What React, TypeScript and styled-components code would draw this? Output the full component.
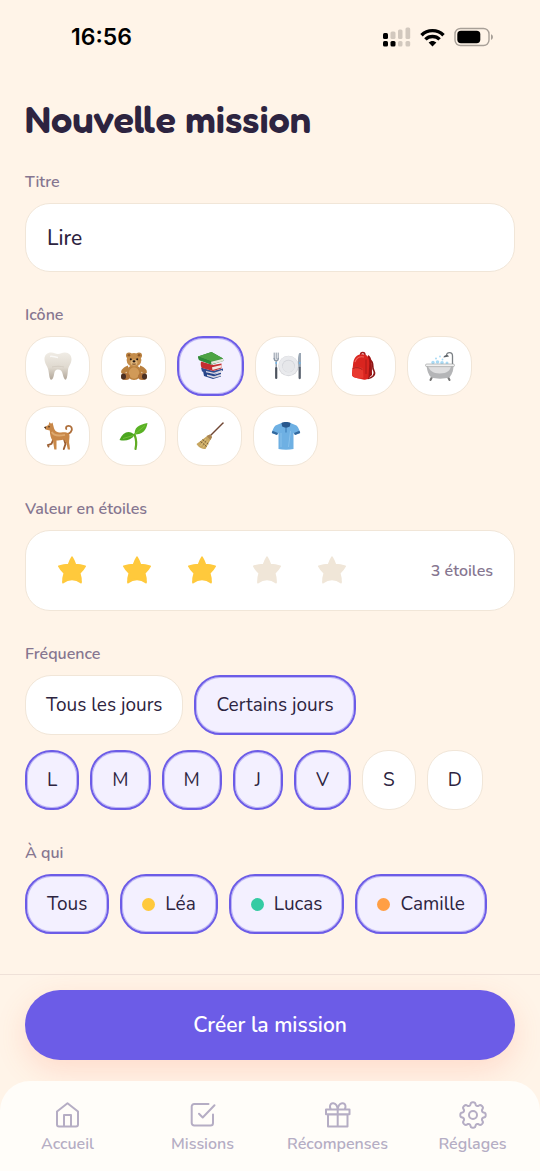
import React, { useState } from 'react';
import styled, { createGlobalStyle } from 'styled-components';

const color = {
  page: '#fff4e8',
  ink: '#2d2440',
  muted: '#867690',
  tab: '#b5adc4',
  primary: '#6c5ce7',
  tint: '#f3f0ff',
  line: '#f1e6d8',
  star: '#ffc93c',
  starOff: '#f0e6d8',
};

const GlobalStyle = createGlobalStyle`
  *, *::before, *::after { box-sizing: border-box; }
  body {
    margin: 0;
    background: ${color.page};
    color: ${color.ink};
    font-family: Nunito, Lato, "Open Sans", sans-serif;
    font-size: 19px;
  }
`;

const Screen = styled.div`
  min-height: 100vh;
  display: flex;
  flex-direction: column;
`;

const StatusBar = styled.header`
  height: 74px;
  padding: 0 46px 0 71px;
  display: flex;
  align-items: center;
  justify-content: space-between;
  color: #000;
`;

const Clock = styled.time`
  font: 600 23px/28px Inter, sans-serif;
`;

const StatusIcons = styled.div`
  display: flex;
  align-items: center;
  gap: 9px;
`;

const Form = styled.form`
  flex: 1;
  display: flex;
  flex-direction: column;
`;

const Content = styled.main`
  flex: 1;
  padding: 20px 25px 40px;
  display: flex;
  flex-direction: column;
  gap: 31px;
`;

const Title = styled.h1`
  margin: 0 0 -5px;
  font-family: Fredoka, Nunito, Lato, sans-serif;
  font-size: 38px;
  line-height: 50px;
  font-weight: 600;
`;

const Field = styled.div`
  display: flex;
  flex-direction: column;
  gap: 9px;
`;

const Caption = styled.label`
  color: ${color.muted};
  font-size: 16px;
  line-height: 24px;
  font-weight: 600;
`;

const TextInput = styled.input`
  width: 100%;
  height: 69px;
  padding: 0 21px;
  border: 1px solid ${color.line};
  border-radius: 25px;
  background: #fff;
  color: inherit;
  font: inherit;
  font-size: 21px;
  font-weight: 500;
  outline: none;
`;

const ChoiceRow = styled.div<{ $spaced?: boolean }>`
  display: flex;
  flex-wrap: wrap;
  gap: 10px 11px;
  margin-top: ${(p) => (p.$spaced ? '6px' : '0')};
`;

const Choice = styled.label<{ $on: boolean }>`
  position: relative;
  height: 60px;
  padding: 0 20px;
  display: inline-flex;
  align-items: center;
  gap: 10px;
  border: ${(p) => (p.$on ? `2px solid ${color.primary}` : `1px solid ${color.line}`)};
  border-radius: 26px;
  background: ${(p) => (p.$on ? color.tint : '#fff')};
  box-shadow: ${(p) => (p.$on ? 'inset 0 0 0 1px rgba(108, 92, 231, 0.4)' : 'none')};
  line-height: 26px;
  cursor: pointer;
`;

const HiddenInput = styled.input`
  position: absolute;
  inset: 0;
  width: 100%;
  height: 100%;
  margin: 0;
  opacity: 0;
  cursor: pointer;
`;

const EmojiBox = styled.span`
  width: 23px;
  display: flex;
  justify-content: center;

  svg {
    flex: none;
    width: 30px;
    height: 30px;
  }
`;

const Dot = styled.span<{ $color: string }>`
  width: 13px;
  height: 13px;
  border-radius: 50%;
  background: ${(p) => p.$color};
`;

const StarCard = styled.div`
  height: 81px;
  padding: 0 21px;
  display: flex;
  align-items: center;
  justify-content: space-between;
  border: 1px solid ${color.line};
  border-radius: 25px;
  background: #fff;
`;

const Stars = styled.div`
  display: flex;
  gap: 15px;
`;

const StarChoice = styled.label`
  position: relative;
  width: 50px;
  height: 50px;
  display: grid;
  place-items: center;
`;

const StarCount = styled.output`
  color: ${color.muted};
  font-size: 16px;
  line-height: 24px;
  font-weight: 600;
`;

const SubmitBar = styled.div`
  padding: 15px 25px 21px;
  border-top: 1px solid #efe1d8;
`;

const SubmitButton = styled.button`
  width: 100%;
  height: 70px;
  border: 0;
  border-radius: 35px;
  background: ${color.primary};
  box-shadow: 0 10px 30px rgba(255, 107, 74, 0.18);
  color: #fff;
  font: inherit;
  font-size: 21px;
  font-weight: 600;
  cursor: pointer;
`;

const TabBar = styled.nav`
  position: relative;
  height: 90px;
  padding-top: 20px;
  display: grid;
  grid-template-columns: repeat(4, 1fr);
  align-items: start;
  border-radius: 30px 30px 0 0;
  background: #fffdf9;
`;

const Tab = styled.a`
  display: flex;
  flex-direction: column;
  align-items: center;
  gap: 3px;
  color: ${color.tab};
  font-size: 16px;
  line-height: 24px;
  font-weight: 600;
  text-decoration: none;

  svg {
    width: 28px;
    height: 28px;
  }
`;

const SignalIcon = () => (
  <svg width="28" height="20" viewBox="0 0 28 20" aria-hidden="true">
    <g fill="#000">
      <rect x="0" y="6" width="5" height="6" rx="1.5" />
      <rect x="0" y="14" width="5" height="5.5" rx="1.5" />
      <rect x="7.5" y="14" width="5" height="5.5" rx="1.5" />
    </g>
    <g fill="#d2c8be">
      <rect x="7.5" y="4.5" width="5" height="7.5" rx="1.5" />
      <rect x="15" y="2.5" width="4.5" height="9.5" rx="1.5" />
      <rect x="22.5" y="0.5" width="4.7" height="11.5" rx="1.5" />
      <rect x="15" y="14" width="4.5" height="5.5" rx="1.5" />
      <rect x="22.5" y="14" width="4.7" height="5.5" rx="1.5" />
    </g>
  </svg>
);

const WifiIcon = () => (
  <svg width="25" height="19" viewBox="0 0 25 19" aria-hidden="true">
    <g fill="none" stroke="#000" strokeWidth="3.4">
      <path d="M1.5 7.2C7.5 1.1 17.5 1.1 23.5 7.2" />
      <path d="M5.4 11.4C9.3 7.5 15.7 7.5 19.6 11.4" />
    </g>
    <path d="M12.5 18.5 8.6 14.6C10.9 12.5 14.1 12.5 16.4 14.6Z" fill="#000" />
  </svg>
);

const BatteryIcon = () => (
  <svg width="40" height="20" viewBox="0 0 40 20" aria-hidden="true">
    <rect x="1" y="1.5" width="34" height="17" rx="5.5" fill="none" stroke="#a8a098" strokeWidth="1.4" />
    <rect x="3.3" y="3.8" width="23" height="12.4" rx="3.7" fill="#000" />
    <path d="M37 7.2C39.6 8 39.6 12 37 12.8Z" fill="#a8a098" />
  </svg>
);

const StarIcon = ({ filled }: { filled: boolean }) => {
  const fill = filled ? color.star : color.starOff;
  return (
    <svg width="30" height="30" viewBox="0 0 30 30" aria-hidden="true">
      <path
        d="M15 1.2Q16.800 3.900 18.400 8.600Q23.500 8.700 28.200 10.200Q26.500 13.600 22.700 17.200Q24.200 21.500 24 26.700Q19.800 23.300 15 23.300Q10.200 23.300 6 26.700Q5.800 21.500 7.300 17.200Q3.500 13.600 1.800 10.200Q6.500 8.700 11.600 8.600Q13.200 3.900 15 1.200Z"
        fill={fill}
        stroke={fill}
        strokeWidth="1.7"
        strokeLinejoin="round"
      />
    </svg>
  );
};

const Tooth = () => (
  <svg viewBox="0 0 30 30" aria-hidden="true">
    <defs>
      <linearGradient id="tooth" x1="0" y1="0" x2="0" y2="1">
        <stop offset="0" stopColor="#f0ece5" />
        <stop offset=".55" stopColor="#dfd9cf" />
        <stop offset="1" stopColor="#b0a598" />
      </linearGradient>
    </defs>
    <path
      d="M1.500 8C1.500 3.500 5 1.300 8.300 1.600C11 1.800 12.500 3 15 3C17.500 3 19 1.500 22 1.600C26 1.800 28.700 4.500 28.500 8.500C28.300 13 25.500 15 25 19C24.600 22.500 24.300 27 23 28.600C21.700 29.500 20.500 26.500 19.800 23.500C19 20.500 18 18.600 15 18.600C12 18.600 11.500 21 11 23.800C10.500 26.500 9.300 29.500 7.800 28.700C6.200 27.500 6 22 5.300 19C4.500 15 1.500 12.500 1.500 8Z"
      fill="url(#tooth)"
    />
    <path d="M7 5.500C10 4.500 12 6.500 15 6.500" fill="none" stroke="#fff" strokeWidth="1.5" opacity=".7" />
    <path d="M9 16C12 15 18 15 21 16" fill="none" stroke="#cbc3b9" strokeWidth="1" opacity=".6" />
  </svg>
);

const Teddy = () => (
  <svg viewBox="0 0 30 30" aria-hidden="true">
    <g fill="#b9803f">
      <circle cx="10" cy="4.500" r="3" />
      <circle cx="20" cy="4.500" r="3" />
      <path d="M9 14.500C4 16.500 1.500 19 2.300 22C3.500 24 7 22 9.500 19Z" />
      <path d="M21 14.500C26 16.500 28.500 19 27.700 22C26.500 24 23 22 20.500 19Z" />
      <ellipse cx="15" cy="21.500" rx="7.500" ry="7.500" />
    </g>
    <ellipse cx="15" cy="22" rx="5.200" ry="5.800" fill="#d19a58" />
    <ellipse cx="15" cy="9" rx="7.400" ry="7" fill="#c48c4a" />
    <circle cx="10" cy="4.300" r="1.300" fill="#8f5929" />
    <circle cx="20" cy="4.300" r="1.300" fill="#8f5929" />
    <ellipse cx="15" cy="11.500" rx="3.500" ry="3" fill="#deb479" />
    <circle cx="11.800" cy="8.200" r="1" fill="#221713" />
    <circle cx="18.200" cy="8.200" r="1" fill="#221713" />
    <ellipse cx="15" cy="10.200" rx="1.500" ry="1" fill="#221713" />
    <path d="M15 11v1.700M13 12.800c1.200 .9 2.800 .9 4 0" stroke="#6b3f20" strokeWidth=".7" fill="none" />
    <ellipse cx="6.500" cy="25.500" rx="4.500" ry="3.500" fill="#b1733a" />
    <ellipse cx="23.500" cy="25.500" rx="4.500" ry="3.500" fill="#b1733a" />
    <ellipse cx="4.500" cy="25.500" rx="2.500" ry="2.900" fill="#4a3024" />
    <ellipse cx="25.500" cy="25.500" rx="2.500" ry="2.900" fill="#4a3024" />
  </svg>
);

const Books = () => (
  <svg viewBox="0 0 30 30" aria-hidden="true">
    <path d="M7 20 19 23.500 25 21.500V25.500L17 28 8 25Z" fill="#27458a" />
    <path d="M11 23.500 18 25.300 25 23V25L17.500 27 11 25Z" fill="#d9d7e0" />
    <path d="M5 16.500 17 20 27 17.500V19.500L18 23.500 6 20.500Z" fill="#304d91" />
    <path d="M10 20 18 21.700 26 19V21L18 23 10 21.300Z" fill="#dedbe4" />
    <path d="M5 10.500 17 14 25.500 12.500V17.500L17 20 6 17C4.500 15.500 4.500 12.500 5 10.500Z" fill="#c42e30" />
    <path d="M16 16.200 25.500 14V16.500L16.500 19Z" fill="#f3e6e2" />
    <path d="M2 5.500 15.500 1 27 7.500 27.300 10 16 13.500 3 9Z" fill="#257b34" />
    <path d="M2 5.500 15.500 1 27 7.500 15.500 10.500Z" fill="#4da344" />
    <path d="M15 10.700 27 7.700V10.300L15.500 13.200Z" fill="#e3e8dc" />
    <path d="M2 5.500 15 10.500V13.500L3 9Z" fill="#2e8a38" />
  </svg>
);

const Plate = () => (
  <svg viewBox="0 0 30 30" aria-hidden="true">
    <circle cx="15.500" cy="15" r="10.200" fill="#d6d7db" />
    <circle cx="15.500" cy="14.600" r="9.600" fill="#e9eaed" />
    <circle cx="15.500" cy="15" r="6.300" fill="#d1d3d8" />
    <circle cx="15.500" cy="15.400" r="5.800" fill="#e6e7ea" />
    <g fill="none" stroke="#8b96a4" strokeLinecap="round">
      <path d="M1.200 2V7.500M3.200 2V8M5.200 2V7.500" strokeWidth="1" />
      <path d="M1.200 7.500C1.300 10.500 5.200 10.500 5.200 7.500M3.200 10V16" strokeWidth="1.4" />
      <path d="M3.200 17V27" stroke="#4c535e" strokeWidth="2.2" />
    </g>
    <path d="M26.300 2C24.500 5 24.800 12 25.500 17H28V2Z" fill="#99a6b4" />
    <path d="M26.700 17V27" stroke="#59616e" strokeWidth="2.3" strokeLinecap="round" />
    <path d="M2.500 12h1.500M26 12h1.500" stroke="#70b3e6" strokeWidth="2" />
  </svg>
);

const Backpack = () => (
  <svg viewBox="0 0 30 30" aria-hidden="true">
    <path d="M21 9C26 12 22 16 25 20C27 24 23 27 19 27.500" fill="none" stroke="#8c1717" strokeWidth="1.6" />
    <path d="M19 4C23.500 6 23 14 23 24L18 28.500Z" fill="#9e1414" />
    <path d="M11.500 4C11.500 .5 16 .5 16 4" fill="none" stroke="#a01818" strokeWidth="1.5" />
    <path d="M4 14C4.500 7 7 3.500 13 3.200C19 3 20.500 7 20.300 13L19.500 26C19 28.500 17 29 14 28.500L5.500 26.500C3.500 26 3 24.500 3 22.500Z" fill="#d9251f" />
    <path d="M6 11C7.500 6.500 10 5 15 6" fill="none" stroke="#f1675d" strokeWidth="1.2" />
    <path d="M3.500 17C7 15 12 15.500 14 18L14.500 26.500C12 28.500 5 27 3 24.500Z" fill="#e8392f" />
    <path d="M3.800 17.500C7 16 11 16.500 13.500 18.700M17 8.500V23" fill="none" stroke="#9e1818" strokeWidth=".8" />
  </svg>
);

const Bathtub = () => (
  <svg viewBox="0 0 30 30" aria-hidden="true">
    <path d="M27.500 15V5C27.500 .5 21.500 .5 21.500 4.500" fill="none" stroke="#7b8085" strokeWidth="1.3" />
    <path d="M18.500 6.500C18.500 3.500 23.500 3 24 5.500Z" fill="#5c6268" />
    <g fill="#a9daf4">
      <circle cx="8" cy="11.500" r="1.700" />
      <circle cx="12.500" cy="11" r="1.800" />
      <circle cx="17" cy="11.800" r="1.800" />
      <circle cx="22" cy="12" r="1.500" />
      <circle cx="11" cy="7.500" r="1" />
      <circle cx="15" cy="5.500" r=".9" />
      <circle cx="17.500" cy="8.500" r=".9" />
    </g>
    <path d="M7 26 5.500 29M23 26l1.500 3" stroke="#777" strokeWidth="2" strokeLinecap="round" />
    <path d="M1.500 14.500H28.500C28.500 20 26.500 24.500 24 26.500C20 28 10 28 6.500 26.500C3.500 24.500 2 19 1.500 14.500Z" fill="#b4b5b7" />
    <path d="M3 15H26C25.500 19 22.500 22.500 14.500 22.500C8 22.500 4 19 3 15Z" fill="#dededf" />
    <rect x=".5" y="13" width="29" height="2.600" rx="1.300" fill="#f1f1f1" stroke="#999a9b" strokeWidth=".6" />
  </svg>
);

const Dog = () => (
  <svg viewBox="0 0 30 30" aria-hidden="true">
    <path d="M25.200 12.800C29 11.500 30 7 27.300 5.300C24.800 4 22.300 5.800 23.300 8" fill="none" stroke="#ae6f3b" strokeWidth="1.8" strokeLinecap="round" />
    <path d="M21 18 22.500 23 20.800 28M10.500 18 8.500 22.800 5 24 5.500 25.500" fill="none" stroke="#9b5e31" strokeWidth="1.900" strokeLinecap="round" />
    <path d="M1.500 6 5.500 4 6.500 1 8 2.800 9.500 1.500 10.800 6.500C11.500 9.500 13.500 11.500 18 11.500C23 10.800 26.500 11.500 26.500 15C26.500 18.500 25.500 21 26.500 24L27 28.500H24.800L23.500 22.500 21 18.500C18 19.300 15 19.500 13.500 19.500L13.500 28.500H11.300L10 20C7.800 17.500 7 14 6.800 9.500L2.500 8.500Z" fill="#c88748" />
    <path d="M8.800 11C10.500 14.500 14 15.500 22 13.800" fill="none" stroke="#dda86e" strokeWidth="1.8" />
    <path d="M1 6 3 5.800 2.500 8Z" fill="#2b211e" />
    <circle cx="6" cy="5.700" r=".7" fill="#2b211e" />
  </svg>
);

const Seedling = () => (
  <svg viewBox="0 0 30 30" aria-hidden="true">
    <path d="M16.500 28C18 22 17.200 18 15.500 13.500" fill="none" stroke="#61ac24" strokeWidth="2.2" strokeLinecap="round" />
    <path d="M15.800 13.500C15 7 19 4 28.500 2C27.500 9 23.500 13.500 15.800 13.500Z" fill="#59b124" />
    <path d="M15.800 14C10 8.500 4 11 .5 19C6.500 20.500 12 19 15.800 14Z" fill="#4ba51f" />
    <path d="M16 13 26 4.500M14.500 14.500 4 17.500" fill="none" stroke="#7cc63c" strokeWidth=".8" />
  </svg>
);

const Broom = () => (
  <svg viewBox="0 0 30 30" aria-hidden="true">
    <path d="M14 16 28 2" stroke="#704734" strokeWidth="1.5" strokeLinecap="round" />
    <path d="M11.500 15.500 15 13.500 17 16 15 19.500 10.500 28C7 28 3 26 1.500 23Z" fill="#c7a660" />
    <path d="M11.500 15 15 13.500 17 16 15.500 19Z" fill="#a98350" />
    <path d="M7.500 18.500 13.300 23M5.500 20.500 11.500 25.500" stroke="#765c38" strokeWidth="1" />
    <path d="M11 18 5.500 25M13 19.500 8 26.500" stroke="#e2c987" strokeWidth=".8" />
  </svg>
);

const Shirt = () => (
  <svg viewBox="0 0 30 30" aria-hidden="true">
    <path d="M10.500 2 4.500 4.500C2.500 6 1.500 9.500 .8 12L6 14 7.500 12V28C12 29 18 29 22.500 28V12L24 14 29.200 12C28.500 9.500 27.500 6 25.500 4.500L19.500 2Z" fill="#6eb0e3" />
    <path d="M10.500 2C12 .8 18 .8 19.500 2L18.800 5.500 15 7 11.200 5.500Z" fill="#28588d" />
    <path d="M.8 12 1.500 9.800 7 12 6 14ZM29.200 12 28.500 9.800 23 12 24 14Z" fill="#34699e" />
    <path d="M15 6.500V11.500" stroke="#3d7fb9" strokeWidth="1.2" />
    <path d="M10 12V26M19.500 10 17.500 26" stroke="#94c9ef" strokeWidth="1" opacity=".7" />
  </svg>
);

const stroke = {
  fill: 'none',
  stroke: 'currentColor',
  strokeWidth: 2,
  strokeLinecap: 'round' as const,
  strokeLinejoin: 'round' as const,
};

const HomeIcon = () => (
  <svg viewBox="0 0 28 28" aria-hidden="true" {...stroke}>
    <path d="M3 10.500 13.500 2.300 24 10.500V23.500a2 2 0 0 1-2 2H5A2 2 0 0 1 3 23.500ZM10 25.500V14h7V25.500" />
  </svg>
);

const CheckIcon = () => (
  <svg viewBox="0 0 28 28" aria-hidden="true" {...stroke}>
    <path d="M19.500 3H5.200A2.500 2.500 0 0 0 2.700 5.500V22A2.500 2.500 0 0 0 5.200 24.500H21.500A2.500 2.500 0 0 0 24 22V13.500M10 12.800 13.700 16.500 25.500 4.300" />
  </svg>
);

const GiftIcon = () => (
  <svg viewBox="0 0 28 28" aria-hidden="true" {...stroke}>
    <path d="M2 8.500h23.500v4.700H2ZM4 13.500h19.500V25.500H4ZM13.700 8.500V25.500M13.700 8.500C13 .5 5.500 .5 6 6Q6.200 7.500 7 8.500M13.700 8.500C14.500 .5 22 .5 21.500 6Q21.300 7.500 20.500 8.500" />
  </svg>
);

/* Eight rounded teeth around the hub. */
const gearOutline =
  Array.from({ length: 160 }, (_, i) => {
    const a = (i / 160) * Math.PI * 2;
    const r = 11.2 + 1.5 * Math.tanh(1.8 * Math.cos(8 * a) + 0.4);
    return `${i ? 'L' : 'M'}${(14 + r * Math.cos(a)).toFixed(2)} ${(14 + r * Math.sin(a)).toFixed(2)}`;
  }).join('') + 'Z';

const GearIcon = () => (
  <svg viewBox="0 0 28 28" aria-hidden="true" {...stroke}>
    <path d={gearOutline} />
    <circle cx="14" cy="14" r="4" />
  </svg>
);

const missionIcons = [
  { name: 'Dent', Art: Tooth },
  { name: 'Ours', Art: Teddy },
  { name: 'Livres', Art: Books },
  { name: 'Repas', Art: Plate },
  { name: 'Sac', Art: Backpack },
  { name: 'Bain', Art: Bathtub },
  { name: 'Chien', Art: Dog },
  { name: 'Plante', Art: Seedling },
  { name: 'Balai', Art: Broom },
  { name: 'T-shirt', Art: Shirt },
];

const days = [
  ['L', 'Lundi'],
  ['M', 'Mardi'],
  ['M', 'Mercredi'],
  ['J', 'Jeudi'],
  ['V', 'Vendredi'],
  ['S', 'Samedi'],
  ['D', 'Dimanche'],
];

const children = [
  { name: 'Léa', dot: '#ffc93c' },
  { name: 'Lucas', dot: '#34cba3' },
  { name: 'Camille', dot: '#ff9f45' },
];

const tabs = [
  { name: 'Accueil', Icon: HomeIcon },
  { name: 'Missions', Icon: CheckIcon },
  { name: 'Récompenses', Icon: GiftIcon },
  { name: 'Réglages', Icon: GearIcon },
];

const toggle = (list: number[], i: number) =>
  list.includes(i) ? list.filter((n) => n !== i) : [...list, i];

export default function App() {
  const [title, setTitle] = useState('Lire');
  const [icon, setIcon] = useState(2);
  const [stars, setStars] = useState(3);
  const [frequency, setFrequency] = useState(1);
  const [activeDays, setActiveDays] = useState([0, 1, 2, 3, 4]);
  const [assigned, setAssigned] = useState([0, 1, 2]);
  const everyone = assigned.length === children.length;

  return (
    <Screen>
      <GlobalStyle />
      <StatusBar>
        <Clock>16:56</Clock>
        <StatusIcons>
          <SignalIcon />
          <WifiIcon />
          <BatteryIcon />
        </StatusIcons>
      </StatusBar>

      <Form onSubmit={(e) => e.preventDefault()}>
        <Content>
          <Title>Nouvelle mission</Title>

          <Field>
            <Caption htmlFor="title">Titre</Caption>
            <TextInput id="title" value={title} onChange={(e) => setTitle(e.target.value)} />
          </Field>

          <Field role="radiogroup" aria-labelledby="icon-caption">
            <Caption as="span" id="icon-caption">Icône</Caption>
            <ChoiceRow>
              {missionIcons.map(({ name, Art }, i) => (
                <Choice key={name} $on={icon === i}>
                  <HiddenInput type="radio" name="icon" aria-label={name} checked={icon === i} onChange={() => setIcon(i)} />
                  <EmojiBox><Art /></EmojiBox>
                </Choice>
              ))}
            </ChoiceRow>
          </Field>

          <Field role="radiogroup" aria-labelledby="stars-caption">
            <Caption as="span" id="stars-caption">Valeur en étoiles</Caption>
            <StarCard>
              <Stars>
                {[1, 2, 3, 4, 5].map((n) => (
                  <StarChoice key={n}>
                    <HiddenInput type="radio" name="stars" aria-label={`${n}`} checked={stars === n} onChange={() => setStars(n)} />
                    <StarIcon filled={n <= stars} />
                  </StarChoice>
                ))}
              </Stars>
              <StarCount>{`${stars} étoile${stars > 1 ? 's' : ''}`}</StarCount>
            </StarCard>
          </Field>

          <Field role="group" aria-labelledby="frequency-caption">
            <Caption as="span" id="frequency-caption">Fréquence</Caption>
            <ChoiceRow>
              {['Tous les jours', 'Certains jours'].map((name, i) => (
                <Choice key={name} $on={frequency === i}>
                  <HiddenInput type="radio" name="frequency" checked={frequency === i} onChange={() => setFrequency(i)} />
                  {name}
                </Choice>
              ))}
            </ChoiceRow>
            {frequency === 1 && (
              <ChoiceRow $spaced>
                {days.map(([letter, name], i) => (
                  <Choice key={name} $on={activeDays.includes(i)}>
                    <HiddenInput
                      type="checkbox"
                      aria-label={name}
                      checked={activeDays.includes(i)}
                      onChange={() => setActiveDays(toggle(activeDays, i))}
                    />
                    {letter}
                  </Choice>
                ))}
              </ChoiceRow>
            )}
          </Field>

          <Field role="group" aria-labelledby="who-caption">
            <Caption as="span" id="who-caption">À qui</Caption>
            <ChoiceRow>
              <Choice $on={everyone}>
                <HiddenInput type="checkbox" checked={everyone} onChange={() => setAssigned(everyone ? [] : [0, 1, 2])} />
                Tous
              </Choice>
              {children.map(({ name, dot }, i) => (
                <Choice key={name} $on={assigned.includes(i)}>
                  <HiddenInput type="checkbox" checked={assigned.includes(i)} onChange={() => setAssigned(toggle(assigned, i))} />
                  <Dot $color={dot} />
                  {name}
                </Choice>
              ))}
            </ChoiceRow>
          </Field>
        </Content>

        <SubmitBar>
          <SubmitButton type="submit">Créer la mission</SubmitButton>
        </SubmitBar>
      </Form>

      <TabBar>
        {tabs.map(({ name, Icon }) => (
          <Tab key={name} href="#">
            <Icon />
            {name}
          </Tab>
        ))}
      </TabBar>
    </Screen>
  );
}
